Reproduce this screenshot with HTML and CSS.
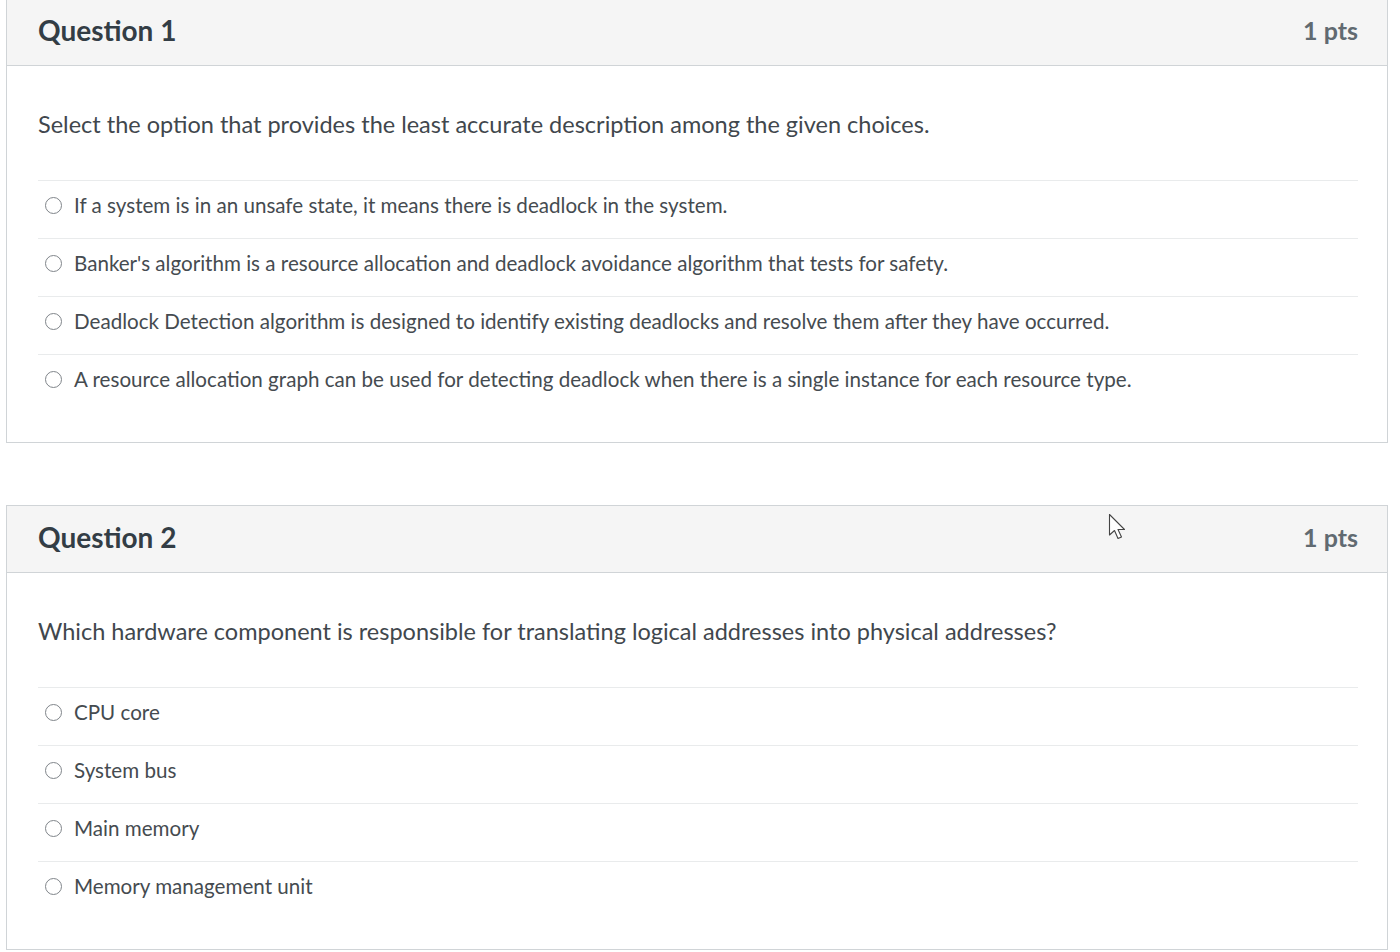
FILE: index.html
```html
<!DOCTYPE html>
<html lang="en">
<head>
<meta charset="utf-8">
<title>Quiz</title>
<link rel="stylesheet" href="styles.css">
</head>
<body>
<main class="quiz">
  <section class="card">
    <header class="card-header">
      <h2 class="q-title">Question 1</h2>
      <span class="q-points">1 pts</span>
    </header>
    <div class="card-body">
      <p class="q-text">Select the option that provides the least accurate description among the given choices.</p>
      <ul class="answers">
        <li class="answer"><span class="radio"></span><span class="answer-label">If a system is in an unsafe state, it means there is deadlock in the system.</span></li>
        <li class="answer"><span class="radio"></span><span class="answer-label">Banker's algorithm is a resource allocation and deadlock avoidance algorithm that tests for safety.</span></li>
        <li class="answer"><span class="radio"></span><span class="answer-label">Deadlock Detection algorithm is designed to identify existing deadlocks and resolve them after they have occurred.</span></li>
        <li class="answer"><span class="radio"></span><span class="answer-label">A resource allocation graph can be used for detecting deadlock when there is a single instance for each resource type.</span></li>
      </ul>
    </div>
  </section>

  <section class="card">
    <header class="card-header">
      <h2 class="q-title">Question 2</h2>
      <span class="q-points">1 pts</span>
    </header>
    <div class="card-body">
      <p class="q-text">Which hardware component is responsible for translating logical addresses into physical addresses?</p>
      <ul class="answers">
        <li class="answer"><span class="radio"></span><span class="answer-label">CPU core</span></li>
        <li class="answer"><span class="radio"></span><span class="answer-label">System bus</span></li>
        <li class="answer"><span class="radio"></span><span class="answer-label">Main memory</span></li>
        <li class="answer"><span class="radio"></span><span class="answer-label">Memory management unit</span></li>
      </ul>
    </div>
    <svg class="cursor" width="22" height="30" viewBox="0 0 22 30" aria-hidden="true">
      <path d="M1.5 1.5 L1.5 22 L6.5 17.5 L10 25.5 L13.5 24 L10 16.5 L16.5 16.5 Z" fill="#ffffff" stroke="#444" stroke-width="1.1" stroke-linejoin="round"/>
    </svg>
  </section>
</main>
</body>
</html>
```

FILE: styles.css
```css
* { box-sizing: border-box; }

html, body {
  margin: 0;
  padding: 0;
  background: #ffffff;
}

body {
  font-family: Lato, "Open Sans", "Liberation Sans", sans-serif;
  color: #3a3f44;
  overflow: hidden;
}

.quiz {
  display: flex;
  flex-direction: column;
  gap: 62px;
  margin-top: -2px;
  padding-left: 6px;
  width: 1388px;
}

.card {
  position: relative;
  border: 1px solid #d0d4d7;
  background: #ffffff;
}

.card-header {
  height: 67px;
  background: #f5f5f5;
  border-bottom: 1px solid #d0d4d7;
  display: flex;
  align-items: center;
  justify-content: space-between;
  padding: 0 29px 5px 31px;
}

.q-title {
  margin: 0;
  font-size: 28px;
  font-weight: 700;
  color: #333d45;
}

.q-points {
  font-size: 25px;
  font-weight: 700;
  color: #616a71;
}

.card-body {
  padding: 44px 29px 30px 31px;
}

.q-text {
  margin: 0 0 42px;
  font-size: 23.5px;
  line-height: 28px;
  color: #41474d;
}

.answers {
  list-style: none;
  margin: 0;
  padding: 0;
}

.answer {
  display: flex;
  align-items: center;
  height: 58px;
  border-top: 1px solid #e9ebec;
  padding: 0 0 9px 7px;
}

.radio {
  width: 17px;
  height: 17px;
  border: 1.5px solid #80858a;
  border-radius: 50%;
  flex: none;
  margin-right: 12px;
  background: #ffffff;
}

.answer-label {
  font-size: 20.6px;
  line-height: 24px;
  color: #454b50;
}

.cursor {
  position: absolute;
  left: 1101px;
  top: 7px;
}
```
